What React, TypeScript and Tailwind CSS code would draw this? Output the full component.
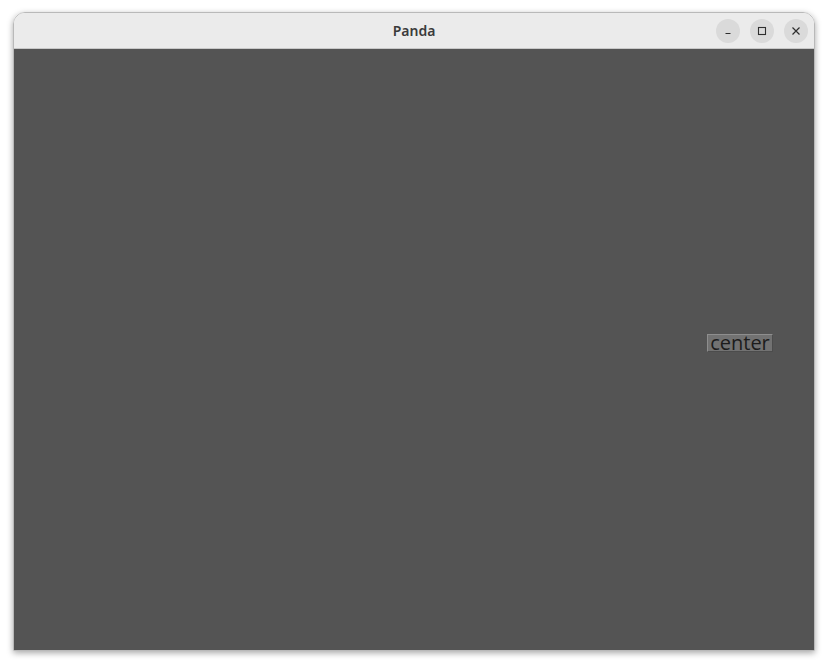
import React from "react";

const WinButton = ({ children }: { children: React.ReactNode }) => (
  <div className="w-6 h-6 rounded-full bg-[#dadada] flex items-center justify-center text-[#2e2e2e]">
    {children}
  </div>
);

export default function App() {
  return (
    <div className="w-[828px] h-[666px] bg-white pt-3 pl-[13px]" style={{ fontFamily: '"Noto Sans", "DejaVu Sans", sans-serif' }}>
      <div className="w-[802px] h-[639px] flex flex-col rounded-t-[12px] overflow-hidden border border-[#b9b9b9] shadow-[0_2px_6px_rgba(0,0,0,0.35)]">
        <div className="h-[36px] shrink-0 bg-[#ebebeb] border-b border-[#c8c8c8] relative flex items-center justify-center">
          <span className="text-[14px] font-semibold text-[#3b3b3b]">Panda</span>
          <div className="absolute right-[6px] top-[6px] flex gap-[10px]">
            <WinButton>
              <svg width="10" height="10" viewBox="0 0 10 10"><path d="M2.5 7.5h5" stroke="currentColor" strokeWidth="1.2" /></svg>
            </WinButton>
            <WinButton>
              <svg width="10" height="10" viewBox="0 0 10 10"><rect x="1.5" y="1.5" width="7" height="7" fill="none" stroke="currentColor" strokeWidth="1.1" /></svg>
            </WinButton>
            <WinButton>
              <svg width="10" height="10" viewBox="0 0 10 10"><path d="M1.5 1.5l7 7M8.5 1.5l-7 7" stroke="currentColor" strokeWidth="1.2" /></svg>
            </WinButton>
          </div>
        </div>
        <div className="flex-1 bg-[#545454] relative">
          <div
            className="absolute left-[693px] top-[285px] w-[66px] h-[18px] bg-[#727272] border-t border-l border-[#8e8e8e] border-r border-b border-r-[#4c4c4c] border-b-[#4c4c4c] flex items-center justify-center text-[20px] leading-none text-[#1c1c1c] whitespace-nowrap"
            style={{ fontFamily: '"Open Sans", "Noto Sans", sans-serif' }}
          >
            center
          </div>
        </div>
      </div>
    </div>
  );
}
